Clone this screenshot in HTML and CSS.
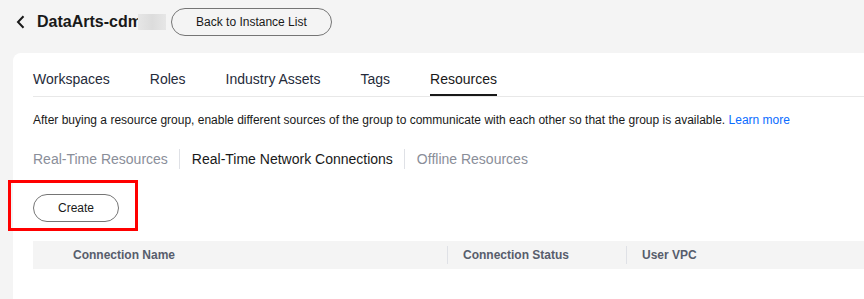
FILE: index.html
```html
<!DOCTYPE html>
<html lang="en">
<head>
    <meta charset="UTF-8">
    <meta name="viewport" content="width=device-width, initial-scale=1.0">
    <title>DataArts-cdm</title>
    <link rel="stylesheet" href="styles.css">
</head>
<body>
    <div class="page-header">
        <button class="back-icon" aria-label="Back">
            <svg width="9" height="14" viewBox="0 0 9 14">
                <path d="M7.5 1.2 L2 7 L7.5 12.8" fill="none" stroke="#191919" stroke-width="2"/>
            </svg>
        </button>
        <h1 class="page-title">DataArts-cdm<span class="masked"></span></h1>
        <button class="btn-round btn-back">Back to Instance List</button>
    </div>

    <div class="card">
        <!-- 상단 탭 -->
        <div class="tabs">
            <span class="tab">Workspaces</span>
            <span class="tab">Roles</span>
            <span class="tab">Industry Assets</span>
            <span class="tab">Tags</span>
            <span class="tab active">Resources</span>
        </div>

        <p class="desc">After buying a resource group, enable different sources of the group to communicate with each other so that the group is available. <a href="#" class="link">Learn more</a></p>

        <!-- 하위 탭 -->
        <div class="sub-tabs">
            <span class="sub-tab">Real-Time Resources</span>
            <span class="sub-tab active">Real-Time Network Connections</span>
            <span class="sub-tab">Offline Resources</span>
        </div>

        <div class="toolbar">
            <button class="btn-round btn-create">Create</button>
            <div class="highlight"></div>
        </div>

        <div class="table-head">
            <div class="col col-name">Connection Name</div>
            <div class="col col-status">Connection Status</div>
            <div class="col col-vpc">User VPC</div>
        </div>
    </div>
</body>
</html>
```

FILE: styles.css
```css
body {
    font-family: "Liberation Sans", Arial, sans-serif;
    background-color: #f4f4f4;
    margin: 0;
    padding: 0;
    overflow: hidden;
    color: #191919;
}

.page-header {
    display: flex;
    align-items: center;
    height: 28px;
    padding: 8px 0 0 16px;
}

.back-icon {
    display: flex;
    align-items: center;
    background: none;
    border: none;
    padding: 0;
    margin-right: 12px;
    cursor: pointer;
}

.page-title {
    display: flex;
    align-items: center;
    margin: 0;
    font-size: 16px;
    font-weight: bold;
    color: #191919;
}

.masked {
    display: inline-block;
    width: 28px;
    height: 16px;
    margin-left: -4px;
    background: linear-gradient(90deg, #e6e6e6, #dcdcdc 50%, #e6e6e6);
}

.btn-round {
    height: 28px;
    padding: 0 24px;
    font-family: inherit;
    font-size: 12px;
    color: #191919;
    background-color: #fff;
    border: 1px solid #757575;
    border-radius: 14px;
    cursor: pointer;
}

.btn-back {
    width: 161px;
    margin-left: 5px;
    background-color: #f4f4f4;
}

.card {
    margin: 17px -20px 0 13px;
    padding: 16px 0 0 20px;
    height: 231px;
    background-color: #fff;
    border-radius: 8px 8px 0 0;
}

.tabs {
    display: flex;
    gap: 40px;
    border-bottom: 1px solid #e8e8e8;
}

.tab {
    font-size: 14px;
    line-height: 20px;
    padding-bottom: 5px;
    border-bottom: 2px solid transparent;
    color: #252b3a;
}

.tab.active {
    color: #191919;
    border-bottom-color: #191919;
}

.desc {
    margin: 14px 0 0;
    font-size: 12px;
    line-height: 18px;
    color: #191919;
}

.link {
    color: #0a6cff;
    text-decoration: none;
}

.sub-tabs {
    display: flex;
    align-items: center;
    margin-top: 20px;
}

.sub-tab {
    font-size: 14px;
    line-height: 16px;
    padding: 2px 11px 2px 12px;
    color: #8a8e99;
    border-left: 1px solid #dfe1e6;
}

.sub-tab:first-child {
    padding-left: 0;
    border-left: none;
}

.sub-tab.active {
    color: #191919;
}

.toolbar {
    position: relative;
    margin-top: 25px;
}

.btn-create {
    width: 86px;
    padding: 0;
}

.highlight {
    position: absolute;
    left: -25px;
    top: -14px;
    width: 124px;
    height: 45px;
    border: 3px solid #ff0000;
}

.table-head {
    display: flex;
    height: 28px;
    margin-top: 19px;
    background-color: #f4f4f4;
    font-size: 12px;
    font-weight: bold;
    color: #575d6c;
}

.col {
    display: flex;
    align-items: center;
}

.col-name {
    width: 374px;
    padding-left: 40px;
}

.col-status {
    width: 163px;
    padding-left: 15px;
    border-left: 1px solid #dfe1e6;
    margin: 5px 0;
}

.col-vpc {
    flex: 1;
    padding-left: 15px;
    border-left: 1px solid #dfe1e6;
    margin: 5px 0;
}
```
